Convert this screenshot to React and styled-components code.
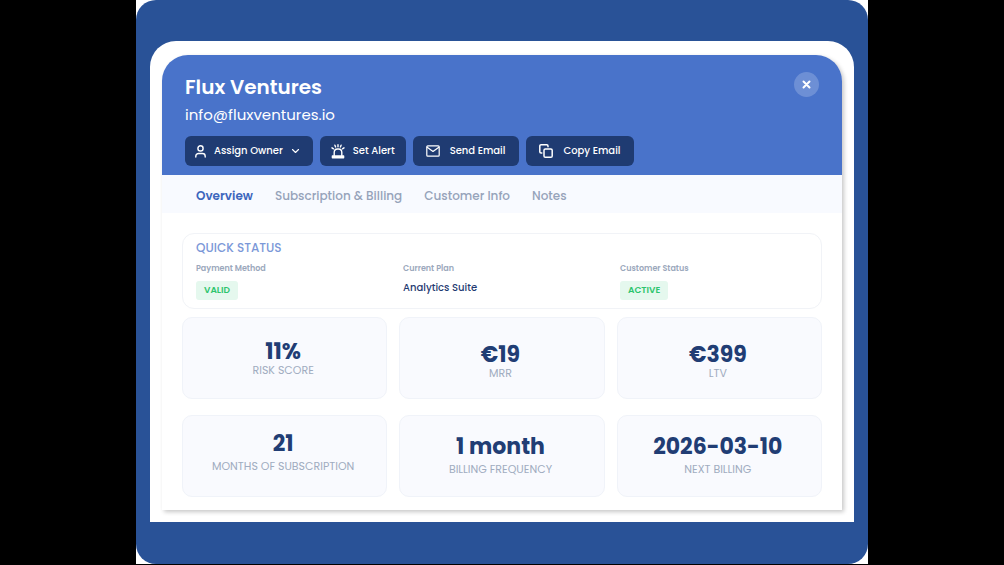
import React, { useState } from "react";
import styled, { createGlobalStyle } from "styled-components";

const GlobalStyle = createGlobalStyle`
* {
    box-sizing: border-box;
}
body {
    margin: 0;
    background-color: #000000;
    font-family: Poppins, Inter, "Open Sans", sans-serif;
}
h1, h2, p, dl, dt, dd {
    margin: 0;
}
button {
    font-family: inherit;
    border: none;
    cursor: pointer;
}
`
const Page = styled.div`
max-width: 732px;
margin: 0 auto;
background-color: #ffffff;
`
const Backdrop = styled.div`
padding: 41px 14px 42px;
border-radius: 20px;
background-color: #295297;
`
const Sheet = styled.div`
padding: 14px 12px 12px;
border-radius: 26px 26px 0 0;
background-color: #ffffff;
`
const Panel = styled.main`
border-radius: 26px 26px 0 0;
background-color: #ffffff;
box-shadow: 2px 2px 4px rgba(0, 0, 0, 0.22);
`
const Header = styled.header`
display: flex;
justify-content: space-between;
align-items: flex-start;
padding: 17px 23px 9px;
border-radius: 26px 26px 0 0;
background-color: #4973ca;
color: #ffffff;
`
const Company = styled.h1`
font-size: 20px;
line-height: 30px;
font-weight: 600;
`
const Email = styled.p`
font-size: 15px;
line-height: 26px;
`
const Actions = styled.div`
display: flex;
gap: 7px;
margin-top: 8px;
`
const ActionButton = styled.button`
display: flex;
align-items: center;
gap: ${({ $gap }) => $gap}px;
height: 30px;
padding: ${({ $pad }) => $pad};
border-radius: 6px;
background-color: #1f3b72;
color: #ffffff;
font-size: 10px;
line-height: 18px;
font-weight: 500;
white-space: nowrap;
`
const CloseButton = styled.button`
display: flex;
justify-content: center;
align-items: center;
width: 25px;
height: 25px;
padding: 0;
border-radius: 50%;
background-color: #6d8fd5;
color: #ffffff;
`
const Tabs = styled.nav`
display: flex;
align-items: center;
gap: 22px;
height: 38px;
padding: 3px 34px 0;
background-color: #f8faff;
`
const Tab = styled.button`
padding: 0;
background: none;
color: ${({ $active }) => ($active ? "#3d66bd" : "#96a3ba")};
font-size: 12px;
line-height: 18px;
font-weight: ${({ $active }) => ($active ? 600 : 500)};
`
const Body = styled.div`
padding: 20px 20px 13px;
`
const Status = styled.section`
padding: 5px 13px 8px;
border: 1px solid #f1f3f7;
border-radius: 12px;
`
const StatusTitle = styled.h2`
color: #7b98d8;
font-size: 12px;
line-height: 18px;
font-weight: 500;
`
const StatusGrid = styled.dl`
display: grid;
grid-template-columns: 207fr 217fr 188fr;
margin-top: 5px;
`
const StatusLabel = styled.dt`
color: #9ba8bc;
font-size: 8px;
line-height: 14px;
font-weight: 600;
`
const StatusValue = styled.dd`
display: flex;
align-items: flex-start;
margin-top: 5px;
`
const Badge = styled.span`
padding: 0 8px;
border-radius: 3px;
background-color: #e5f8ee;
color: #2dc56d;
font-size: 9px;
line-height: 19px;
font-weight: 600;
`
const Plan = styled.span`
color: #1f3b72;
font-size: 10px;
line-height: 14px;
font-weight: 500;
`
const Stats = styled.div`
display: grid;
grid-template-columns: repeat(3, 1fr);
grid-auto-rows: 82px;
gap: 16px 12px;
margin-top: 8px;
`
const Stat = styled.section`
display: flex;
flex-direction: column;
align-items: center;
gap: ${({ $gap }) => $gap}px;
padding: ${({ $top }) => $top}px 3px 0 0;
border: 1px solid #f0f3f9;
border-radius: 10px;
background-color: #f9fafe;
`
const StatValue = styled.p`
color: #213d74;
font-size: 22px;
line-height: 24px;
font-weight: 700;
`
const StatLabel = styled.p`
color: #a0acc0;
font-size: 11px;
line-height: 12px;
`

const strokeProps = {
    fill: "none",
    stroke: "currentColor",
    strokeLinecap: "round",
    strokeLinejoin: "round",
    "aria-hidden": true,
}

const UserIcon = () => (
    <svg width="11" height="13" viewBox="0 0 11 13" strokeWidth="1.4" {...strokeProps}>
        <circle cx="5.5" cy="3.4" r="2.6" />
        <path d="M.8 12v-.8a2.7 2.7 0 0 1 2.7-2.7h4a2.7 2.7 0 0 1 2.7 2.7v.8" />
    </svg>
)
const ChevronIcon = () => (
    <svg width="9" height="6" viewBox="0 0 9 6" strokeWidth="1.1" {...strokeProps}>
        <path d="m1.5 1.5 3 3 3-3" />
    </svg>
)
const AlertIcon = () => (
    <svg width="14" height="15" viewBox="0 0 14 15" strokeWidth="1.4" {...strokeProps}>
        <path d="M3.2 11.5V8.2A3.3 3.3 0 0 1 6.5 5h1a3.3 3.3 0 0 1 3.3 3.2v3.3" />
        <path d="M1.4 12h11.2v1.8H1.4z" fill="currentColor" />
        <path d="M7 .8v1.9M3.9 1.2l.7 1.7M10.1 1.2l-.7 1.7M1 3.8l1.5 1M13 3.8l-1.5 1" />
    </svg>
)
const MailIcon = () => (
    <svg width="14" height="12" viewBox="0 0 14 12" strokeWidth="1.2" {...strokeProps}>
        <rect x=".8" y=".8" width="12.4" height="10.4" rx="1" />
        <path d="m1.2 2.2 5.8 4.3 5.8-4.3" />
    </svg>
)
const CopyIcon = () => (
    <svg width="14" height="14" viewBox="0 0 14 14" strokeWidth="1.5" {...strokeProps}>
        <rect x="5" y="5" width="8.2" height="8.2" rx="1.3" />
        <path d="M2.8 9H2A1.2 1.2 0 0 1 .8 7.8V2A1.2 1.2 0 0 1 2 .8h5.8A1.2 1.2 0 0 1 9 2v.8" />
    </svg>
)
const CloseIcon = () => (
    <svg width="9" height="9" viewBox="0 0 9 9" strokeWidth="2" {...strokeProps}>
        <path d="m1.5 1.5 6 6M7.5 1.5l-6 6" />
    </svg>
)

const tabs = ["Overview", "Subscription & Billing", "Customer Info", "Notes"]

const stats = [
    { value: "11%", label: "RISK SCORE", top: 22, gap: 0 },
    { value: "€19", label: "MRR", top: 25, gap: 0 },
    { value: "€399", label: "LTV", top: 25, gap: 0 },
    { value: "21", label: "MONTHS OF SUBSCRIPTION", top: 16, gap: 4 },
    { value: "1 month", label: "BILLING FREQUENCY", top: 19, gap: 4 },
    { value: "2026-03-10", label: "NEXT BILLING", top: 19, gap: 4 },
]

const App = () => {

    const [activeTab, setActiveTab] = useState("Overview")

    return (
        <Page>
            <GlobalStyle />
            <Backdrop>
                <Sheet>
                    <Panel>
                        <Header>
                            <div>
                                <Company>Flux Ventures</Company>
                                <Email>info@fluxventures.io</Email>
                                <Actions>
                                    <ActionButton $gap={8} $pad="0 13px 0 10px"><UserIcon />Assign Owner<ChevronIcon /></ActionButton>
                                    <ActionButton $gap={8} $pad="0 11px"><AlertIcon />Set Alert</ActionButton>
                                    <ActionButton $gap={10} $pad="0 14px 0 13px"><MailIcon />Send Email</ActionButton>
                                    <ActionButton $gap={10} $pad="0 14px 0 13px"><CopyIcon />Copy Email</ActionButton>
                                </Actions>
                            </div>
                            <CloseButton aria-label="Close"><CloseIcon /></CloseButton>
                        </Header>

                        <Tabs>
                            {tabs.map((tab) => (
                                <Tab key={tab} $active={tab === activeTab} onClick={() => setActiveTab(tab)}>{tab}</Tab>
                            ))}
                        </Tabs>

                        <Body>
                            <Status>
                                <StatusTitle>QUICK STATUS</StatusTitle>
                                <StatusGrid>
                                    <div>
                                        <StatusLabel>Payment Method</StatusLabel>
                                        <StatusValue><Badge>VALID</Badge></StatusValue>
                                    </div>
                                    <div>
                                        <StatusLabel>Current Plan</StatusLabel>
                                        <StatusValue><Plan>Analytics Suite</Plan></StatusValue>
                                    </div>
                                    <div>
                                        <StatusLabel>Customer Status</StatusLabel>
                                        <StatusValue><Badge>ACTIVE</Badge></StatusValue>
                                    </div>
                                </StatusGrid>
                            </Status>

                            <Stats>
                                {stats.map((stat) => (
                                    <Stat key={stat.label} $top={stat.top} $gap={stat.gap}>
                                        <StatValue>{stat.value}</StatValue>
                                        <StatLabel>{stat.label}</StatLabel>
                                    </Stat>
                                ))}
                            </Stats>
                        </Body>
                    </Panel>
                </Sheet>
            </Backdrop>
        </Page>
    );
}
export default App;
